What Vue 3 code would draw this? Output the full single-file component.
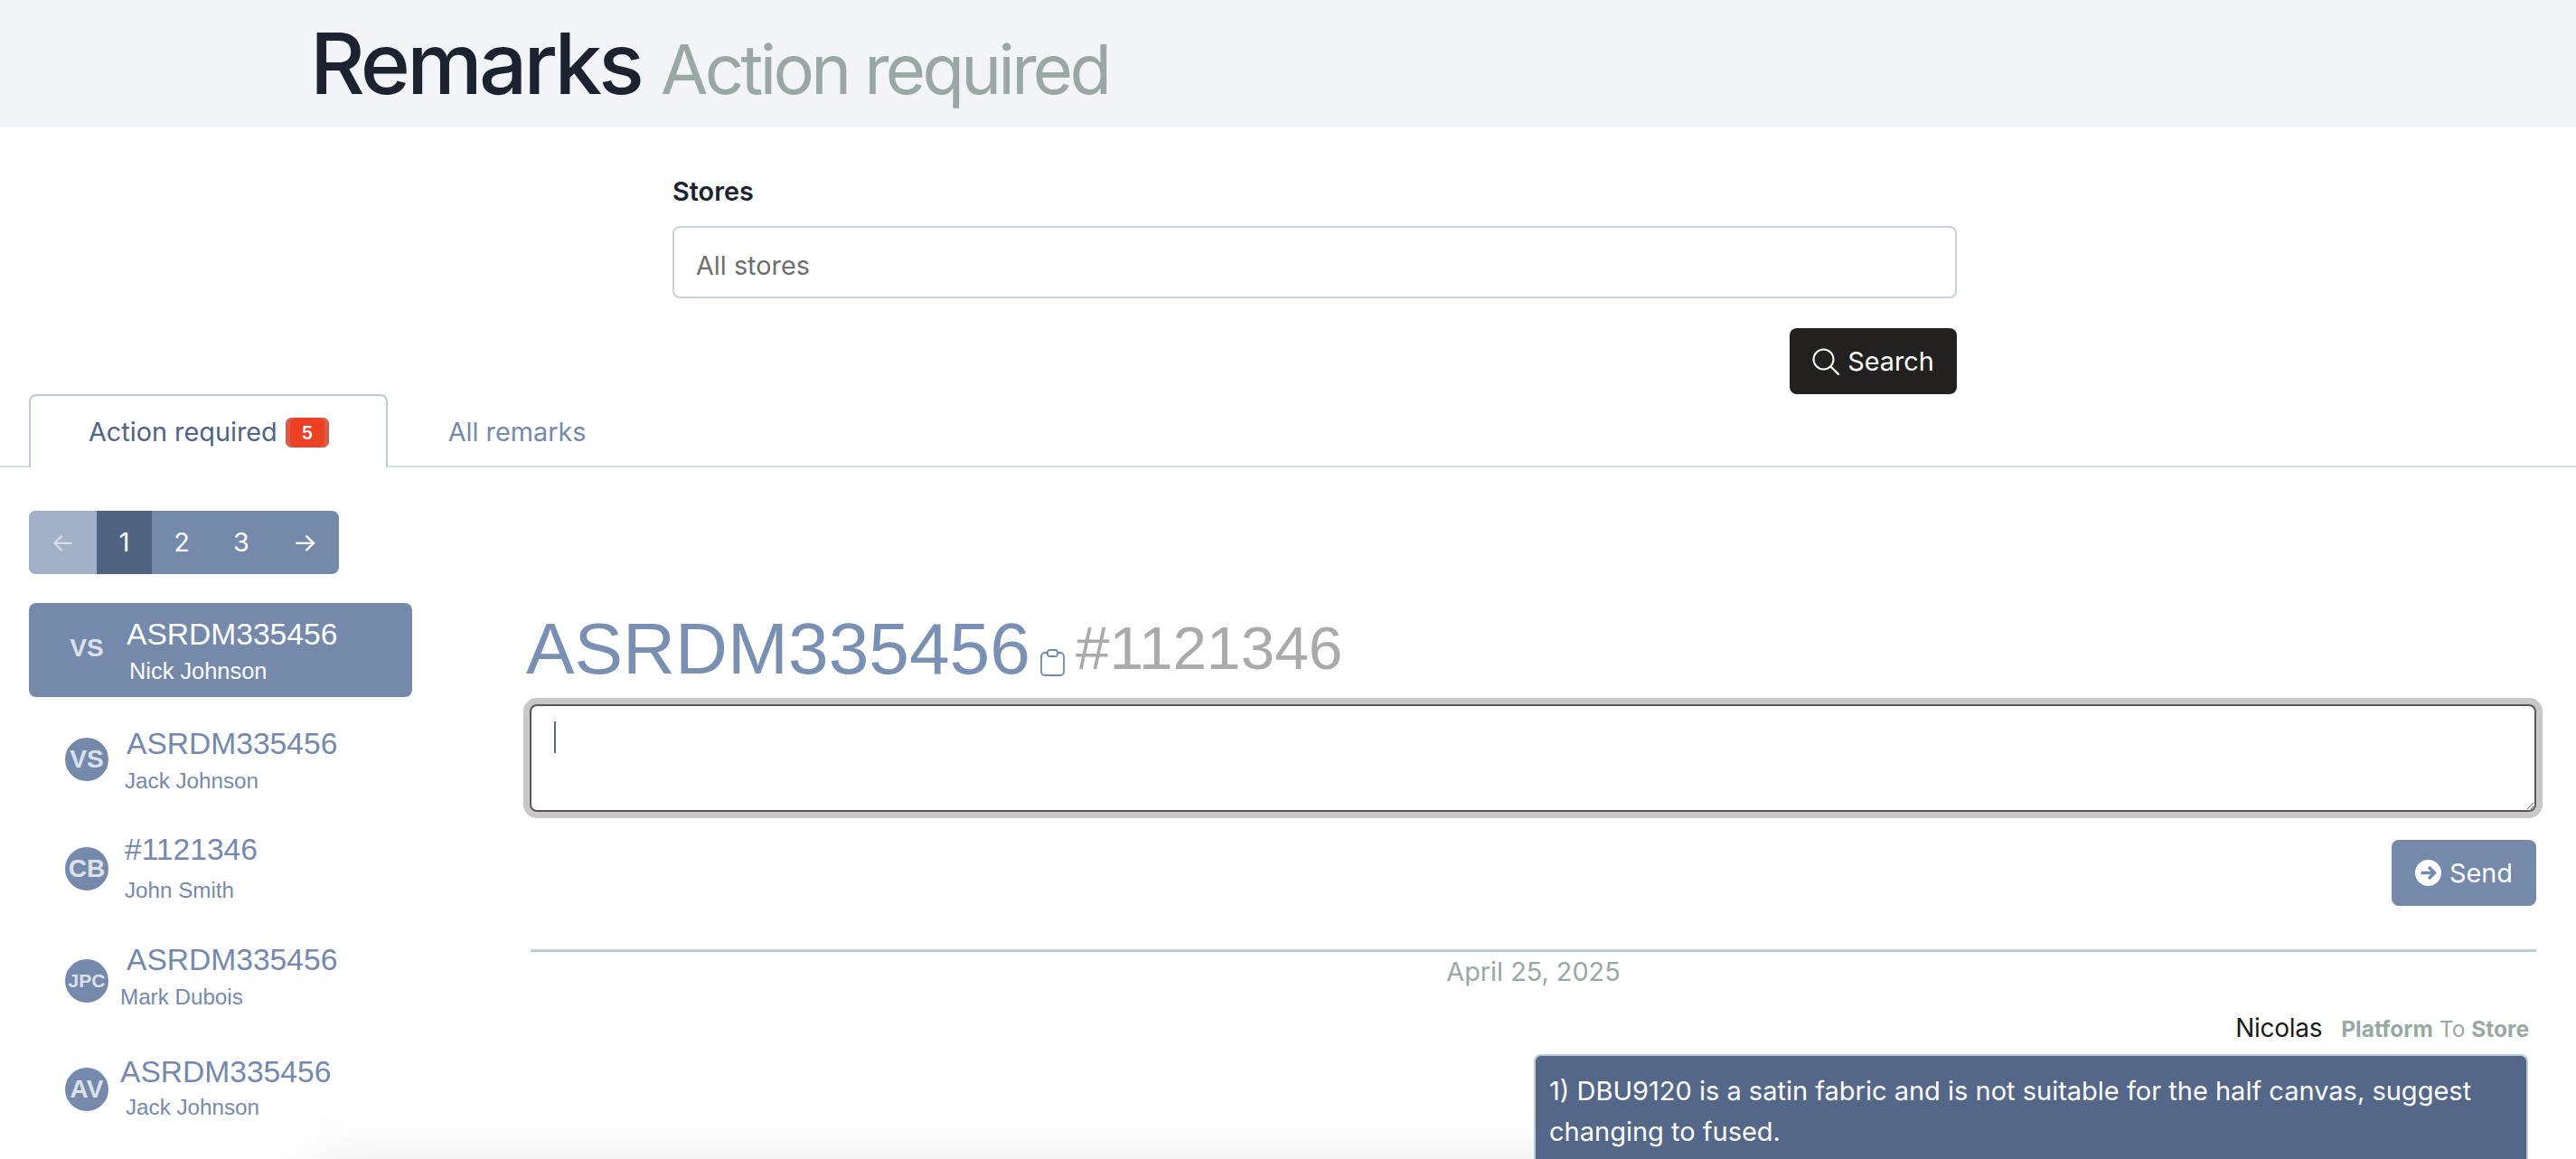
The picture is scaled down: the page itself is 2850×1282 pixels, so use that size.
<template>
  <div class="page">
    <header class="top">
      <h1 class="top-title">Remarks</h1>
      <span class="top-sub">Action required</span>
    </header>

    <section class="filter">
      <label class="filter-label">Stores</label>
      <div class="filter-select">All stores</div>
      <div class="filter-actions">
        <button class="btn-search">
          <svg width="30" height="30" viewBox="0 0 30 30" fill="none" aria-hidden="true">
            <circle cx="12.5" cy="12.5" r="11" stroke="currentColor" stroke-width="2"/>
            <path d="M20.5 20.5L29 29" stroke="currentColor" stroke-width="2.4" stroke-linecap="round"/>
          </svg>
          Search
        </button>
      </div>
    </section>

    <nav class="tabs">
      <a class="tab active">Action required <span class="tab-badge">5</span></a>
      <a class="tab">All remarks</a>
    </nav>

    <div class="content">
      <aside class="side">
        <div class="pager">
          <span class="pg pg-prev">←</span>
          <span class="pg pg-cur">1</span>
          <span class="pg pg-num">2</span>
          <span class="pg pg-num">3</span>
          <span class="pg pg-next">→</span>
        </div>

        <ul class="rows">
          <li
            v-for="(r, i) in rows"
            :key="i"
            class="row"
            :class="{ selected: i === 0 }"
            :style="{ marginTop: r.top + 'px' }"
          >
            <span class="avatar" :class="{ tiny: r.initials.length > 2 }">{{ r.initials }}</span>
            <div class="row-text" :style="{ paddingTop: r.pad + 'px' }">
              <div class="row-title" :style="{ marginLeft: r.tx + 'px' }">{{ r.title }}</div>
              <div class="row-name" :style="{ marginLeft: r.sx + 'px', marginTop: r.gap + 'px' }">{{ r.name }}</div>
            </div>
          </li>
        </ul>
      </aside>

      <main class="detail">
        <div class="detail-head">
          <span class="ref">ASRDM335456</span>
          <svg class="clip" width="27" height="30" viewBox="0 0 27 30" fill="none" aria-hidden="true">
            <rect x="1" y="4" width="25" height="25" rx="4" stroke="currentColor" stroke-width="1.8"/>
            <rect x="8" y="1" width="11" height="7" rx="2.5" fill="#fff" stroke="currentColor" stroke-width="1.8"/>
          </svg>
          <span class="order">#1121346</span>
        </div>

        <div class="composer">
          <textarea class="composer-input"></textarea>
          <span class="caret"></span>
        </div>

        <div class="send-row">
          <button class="btn-send">
            <svg width="29" height="29" viewBox="0 0 29 29" aria-hidden="true">
              <circle cx="14.5" cy="14.5" r="14.5" fill="#fff"/>
              <path d="M6.5 14.5H21M15 8l6.5 6.5L15 21" fill="none" stroke="#7589ab" stroke-width="3.4"/>
            </svg>
            Send
          </button>
        </div>

        <div class="day">April 25, 2025</div>

        <div class="sender">
          <span class="sender-name">Nicolas</span>
          <span class="sender-route"><b>Platform</b> To <b>Store</b></span>
        </div>

        <div class="bubble">
          1) DBU9120 is a satin fabric and is not suitable for the half canvas, suggest changing to fused.
        </div>
      </main>
    </div>

    <!-- shadow of a panel sitting just below the fold -->
    <div class="below-fold"></div>
  </div>
</template>

<script setup>
const rows = [
  { initials: 'VS', title: 'ASRDM335456', name: 'Nick Johnson', top: 0, pad: 15, tx: 0, sx: 3, gap: 4 },
  { initials: 'VS', title: 'ASRDM335456', name: 'Jack Johnson', top: 17, pad: 15, tx: 0, sx: -2, gap: 5 },
  { initials: 'CB', title: '#1121346', name: 'John Smith', top: 17, pad: 11, tx: -2, sx: -2, gap: 9 },
  { initials: 'JPC', title: 'ASRDM335456', name: 'Mark Dubois', top: 20, pad: 9, tx: 0, sx: -7, gap: 5 },
  { initials: 'AV', title: 'ASRDM335456', name: 'Jack Johnson', top: 16, pad: 13, tx: -7, sx: -1, gap: 3 },
]
</script>

<style>
html, body { margin: 0; background: #fff; }
</style>

<style scoped>
.page {
  position: relative;
  height: 1282px;
  overflow: hidden;
  font-family: Inter, "Liberation Sans", sans-serif;
  font-size: 28.8px;
  color: #1b2230;
}

/* Header band */
.top {
  height: 141px;
  box-sizing: border-box;
  padding: 23px 0 0 343px;
  background: #f2f4f8;
  display: flex;
  align-items: baseline;
  gap: 22px;
}

.top-title {
  margin: 0;
  font-size: 94px;
  line-height: 94px;
  font-weight: 500;
  letter-spacing: -3.8px;
  color: #1b2230;
}

.top-sub {
  font-size: 76px;
  line-height: 94px;
  letter-spacing: -3.7px;
  color: #99a7a5;
}

/* Store filter */
.filter {
  width: 1421px;
  margin-left: 744px;
  padding-top: 49px;
}

.filter-label {
  display: block;
  font-weight: 600;
  line-height: 44px;
  margin-bottom: 16px;
}

.filter-select {
  height: 80px;
  box-sizing: border-box;
  padding: 7px 0 0 24px;
  border: 2px solid #c9d1da;
  border-radius: 8px;
  display: flex;
  align-items: center;
  color: #6f6f6f;
}

.filter-actions {
  display: flex;
  justify-content: flex-end;
  margin-top: 33px;
}

.btn-search {
  width: 185px;
  height: 73px;
  padding: 0;
  border: 0;
  border-radius: 8px;
  background: #222120;
  color: #fff;
  font: inherit;
  display: flex;
  align-items: center;
  justify-content: center;
  gap: 9px;
}

/* Tabs */
.tabs {
  display: flex;
  height: 81px;
  box-sizing: border-box;
  padding-left: 32px;
  border-bottom: 2px solid #d8dfe9;
}

.tab {
  height: 81px;
  box-sizing: border-box;
  padding: 0 65px;
  display: flex;
  align-items: center;
  gap: 9px;
  color: #7589ad;
  border: 2px solid transparent;
  border-bottom: 0;
}

.tab.active {
  padding: 0 63px 0 64px;
  color: #4f6385;
  background: #fff;
  border-color: #bccada;
  border-radius: 8px 8px 0 0;
}

.tab-badge {
  width: 48px;
  height: 33px;
  margin-top: 2px;
  border-radius: 7px;
  background: #ec4123;
  box-shadow: inset 5px 0 0 #d65e4c, inset -5px 0 0 #d65e4c;
  color: #fff;
  font-size: 20px;
  font-weight: 600;
  display: flex;
  align-items: center;
  justify-content: center;
}

/* Two columns */
.content {
  display: flex;
  padding-top: 48px;
}

.side {
  width: 424px;
  margin-left: 32px;
  flex-shrink: 0;
}

.pager {
  display: flex;
  width: 343px;
  height: 70px;
  border-radius: 8px;
  overflow: hidden;
  background: #7589ab;
  color: #fff;
  line-height: 70px;
  text-align: center;
}

.pg { width: 66px; }
.pg-prev { width: 75px; background: #a3b1c8; color: #d5dce6; }
.pg-cur { width: 61px; background: #506482; }
.pg-next { width: 75px; }

.rows {
  list-style: none;
  margin: 32px 0 0;
  padding: 0;
  font-family: "Liberation Sans", Arial, sans-serif;
}

.row {
  height: 104px;
  box-sizing: border-box;
  padding-left: 40px;
  border-radius: 8px;
  display: flex;
  gap: 20px;
  color: #7589ad;
}

.row.selected {
  background: #7589ab;
  color: #fff;
}

.avatar {
  flex-shrink: 0;
  width: 48px;
  height: 48px;
  margin-top: 28px;
  border-radius: 50%;
  background: #7589ad;
  color: #dce1e9;
  font-size: 28px;
  font-weight: 700;
  display: flex;
  align-items: center;
  justify-content: center;
}

.avatar.tiny { font-size: 21px; }

.row.selected .avatar { margin-top: 26px; }

.row-title {
  font-size: 33.6px;
  line-height: 40px;
  white-space: nowrap;
}

.row-name {
  font-size: 24.2px;
  line-height: 32px;
  white-space: nowrap;
}

.row.selected .row-name {
  font-size: 25.4px;
}

/* Detail column */
.detail {
  width: 2219px;
  margin-left: 131px;
  flex-shrink: 0;
}

.detail-head {
  margin: 102px 0 0 -5px;
  display: flex;
  align-items: flex-start;
  font-family: "Liberation Sans", Arial, sans-serif;
  height: 100px;
}

.ref {
  font-size: 80.3px;
  line-height: 100px;
  color: #7a90b3;
}

.clip {
  margin: 51px 0 0 11px;
  color: #6f8ab0;
}

.order {
  margin: 5px 0 0 12px;
  font-size: 67.5px;
  line-height: 90px;
  color: #aaaaaa;
}

.composer {
  position: relative;
  margin: 12px 0 0 -1px;
  height: 119px;
}

.composer-input {
  display: block;
  width: 100%;
  height: 119px;
  box-sizing: border-box;
  border: 2px solid #5e5557;
  border-radius: 8px;
  box-shadow: 0 0 0 7px #c8c8c8;
  outline: 0;
  background: #fff;
}

.caret {
  position: absolute;
  left: 27px;
  top: 19px;
  width: 2px;
  height: 35px;
  background: #4f6a93;
}

.send-row {
  display: flex;
  justify-content: flex-end;
  margin-top: 31px;
}

.btn-send {
  width: 160px;
  height: 73px;
  padding: 0;
  border: 0;
  border-radius: 8px;
  background: #7589ab;
  color: #fff;
  font: inherit;
  display: flex;
  align-items: center;
  justify-content: center;
  gap: 9px;
}

.day {
  margin-top: 48px;
  border-top: 3px solid #bccada;
  line-height: 44px;
  text-align: center;
  color: #99a7a5;
}

.sender {
  height: 44px;
  margin-top: 18px;
  padding-right: 8px;
  display: flex;
  justify-content: flex-end;
  align-items: baseline;
  gap: 21px;
  line-height: 44px;
}

.sender-name {
  color: #1a1a1a;
  font-size: 28px;
  letter-spacing: -0.3px;
}

.sender-route {
  font-size: 24.5px;
  color: #99a7a5;
}

.sender-route b { font-weight: 700; }

.bubble {
  width: 1100px;
  min-height: 200px;
  box-sizing: border-box;
  margin: 7px 0 0 auto;
  position: relative;
  z-index: 1;
  left: -9px;
  padding: 16px 15px;
  background: #546788;
  border: 2px solid #bccada;
  border-radius: 8px;
  color: #fff;
  font-size: 29px;
  line-height: 45px;
}

.below-fold {
  position: absolute;
  left: 340px;
  right: 250px;
  top: 1290px;
  height: 100px;
  box-shadow: 0 0 70px rgba(0, 0, 0, 0.1);
  pointer-events: none;
}
</style>
